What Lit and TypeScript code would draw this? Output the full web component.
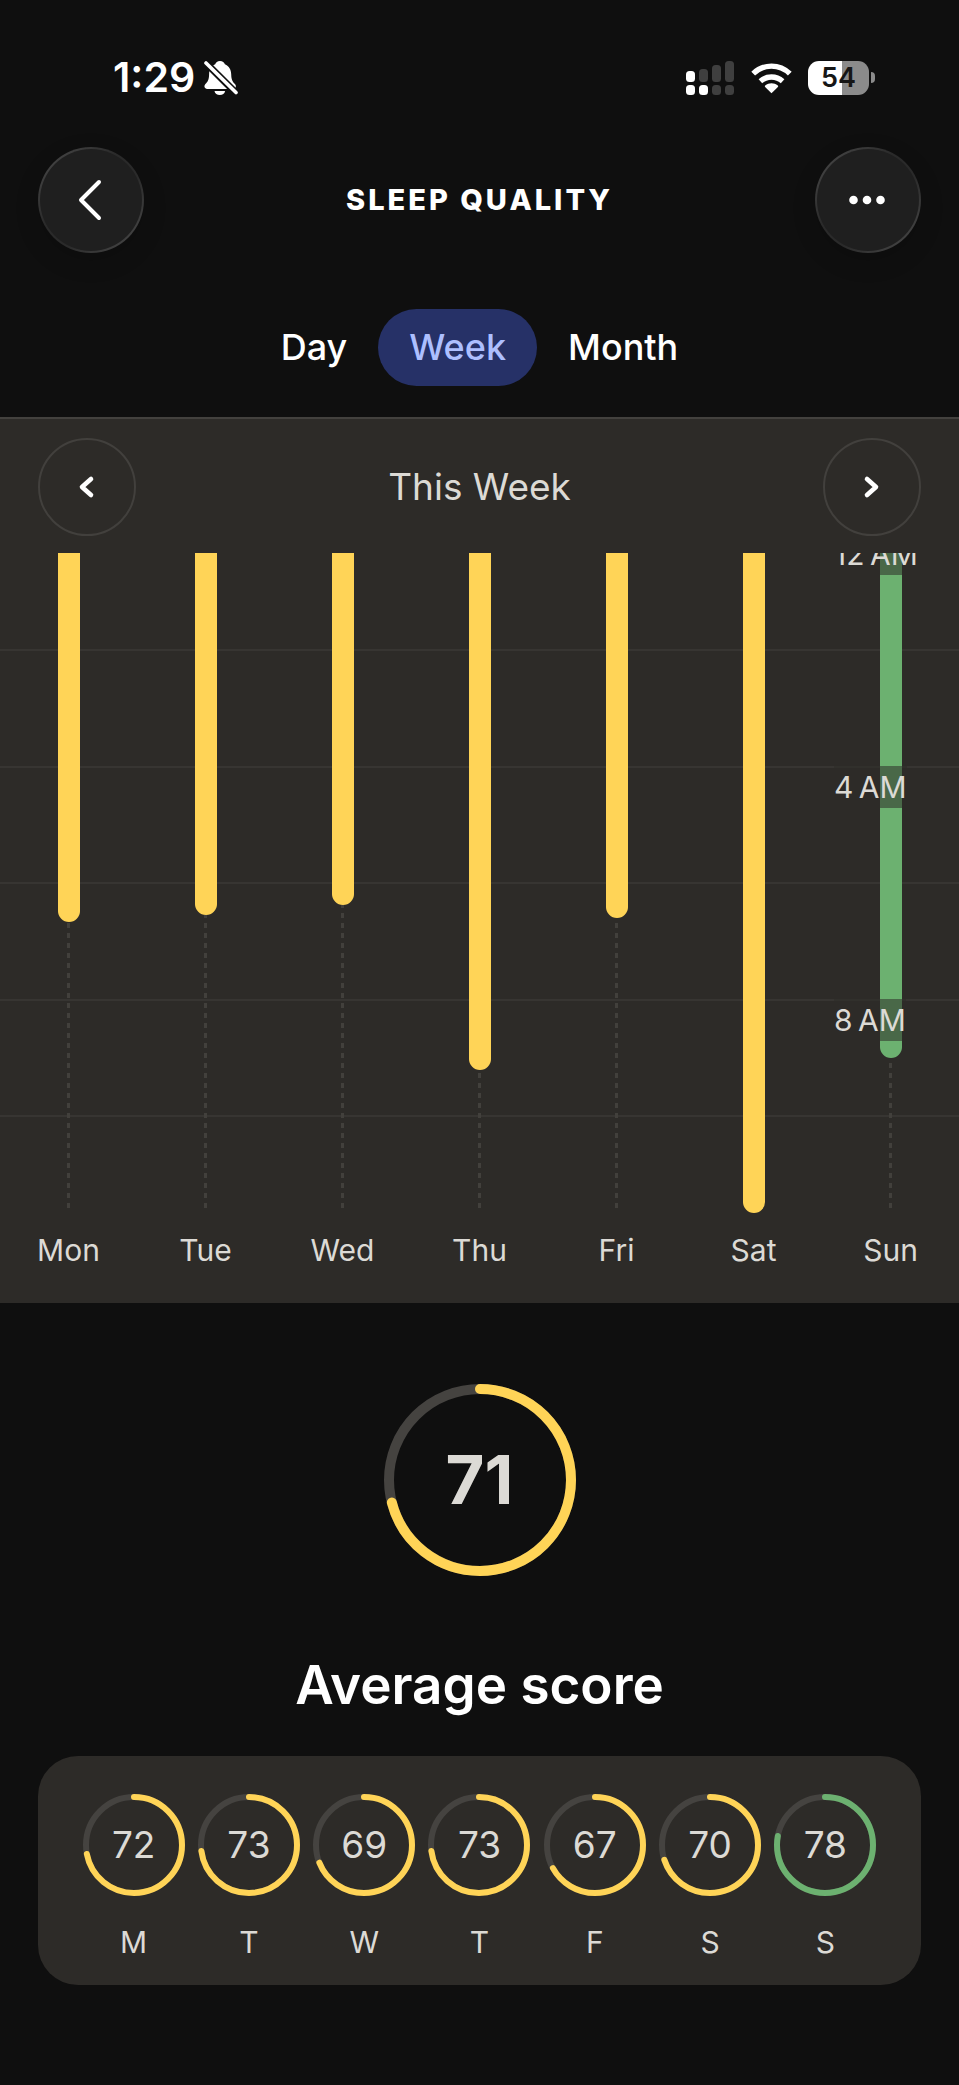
import { LitElement, html, svg, css } from "lit";
import { customElement, property, state } from "lit/decorators.js";
import { classMap } from "lit/directives/class-map.js";
import { styleMap } from "lit/directives/style-map.js";

type Level = "fair" | "good";

interface Night {
  day: string;
  wake: number; // minutes after midnight
  score: number;
  level: Level;
}

const NIGHTS: Night[] = [
  { day: "Mon", wake: 401, score: 72, level: "fair" },
  { day: "Tue", wake: 394, score: 73, level: "fair" },
  { day: "Wed", wake: 383, score: 69, level: "fair" },
  { day: "Thu", wake: 554, score: 73, level: "fair" },
  { day: "Fri", wake: 397, score: 67, level: "fair" },
  { day: "Sat", wake: 701, score: 70, level: "fair" },
  { day: "Sun", wake: 541, score: 78, level: "good" },
];

const LAST_WAKE = Math.max(...NIGHTS.map((n) => n.wake));

// One row per two hours, labelled every four.
const HOURS = ["12\u202fAM", "", "4\u202fAM", "", "8\u202fAM", ""];

@customElement("score-ring")
export class ScoreRing extends LitElement {
  static styles = css`
    :host {
      display: grid;
      place-items: center;
      color: #dcdad5;
    }
    .ring,
    .value {
      grid-area: 1 / 1;
    }
    .ring {
      display: block;
    }
    .track,
    .arc {
      fill: none;
    }
    .track {
      stroke: #454340;
    }
    .arc {
      stroke: #ffd457;
      stroke-linecap: round;
    }
    .arc.good {
      stroke: #6cb170;
    }
    .value {
      font-size: 37px;
      line-height: 48px;
    }
    .value.large {
      font-size: 67px;
      line-height: 80px;
      font-weight: 700;
    }
  `;

  @property({ type: Number }) score = 0;
  @property({ type: Number }) size = 102;
  @property({ type: Number }) stroke = 6;
  @property() level: Level = "fair";

  render() {
    const c = this.size / 2;
    const r = (this.size - this.stroke) / 2;
    return html`
      <svg class="ring" width=${this.size} height=${this.size} aria-hidden="true">
        <circle class="track" cx=${c} cy=${c} r=${r} stroke-width=${this.stroke}></circle>
        <circle
          class=${classMap({ arc: true, good: this.level === "good" })}
          cx=${c}
          cy=${c}
          r=${r}
          stroke-width=${this.stroke}
          pathLength="100"
          stroke-dasharray="${this.score} 100"
          transform="rotate(-90 ${c} ${c})"
        ></circle>
      </svg>
      <span class=${classMap({ value: true, large: this.size > 150 })}>${this.score}</span>
    `;
  }
}

@customElement("status-bar")
export class StatusBar extends LitElement {
  static styles = css`
    :host {
      display: flex;
      align-items: center;
      justify-content: space-between;
      padding: 52px 84px 44px 113px;
      height: 51px;
      color: #fff;
    }
    .side {
      display: flex;
      align-items: center;
    }
    .time {
      font-size: 41px;
      line-height: 51px;
      font-weight: 600;
      margin-right: 9px;
    }
    .icon {
      display: block;
    }
    .wifi {
      margin: 0 16px 0 17px;
    }
    .battery {
      display: flex;
      align-items: center;
      gap: 2px;
    }
    .cell {
      width: 61px;
      height: 34px;
      border-radius: 11px;
      background: linear-gradient(to right, #fff 55%, #8b8b8b 55%);
      color: #161616;
      font-size: 27px;
      line-height: 34px;
      font-weight: 600;
      text-align: center;
    }
    .nub {
      width: 4px;
      height: 11px;
      border-radius: 0 5px 5px 0;
      background: #8b8b8b;
    }
  `;

  render() {
    const heights = [11, 13, 17, 21];
    return html`
      <div class="side">
        <span class="time">1:29</span>
        <svg class="icon" width="34" height="36" viewBox="0 0 34 36" role="img" aria-label="Silent">
          <path
            fill="#fff"
            d="M16 1c2.600 0 4.300 1.400 4.900 3.200 4.200 1.700 6.200 5.400 6.300 10 .1 5.800 1.600 7.600 3.700 9.800 1.900 2 .9 5-1.900 5H3.400C.4 29-.5 26 1.400 24c2.300-2.300 3.600-4.300 3.700-9.800.1-4.600 2-8.300 6.100-10C11.800 2.400 13.400 1 16 1z"
          />
          <path fill="#fff" d="M10.500 31h10.600c-.3 2.500-2.600 4-5.300 4s-5-1.500-5.300-4z" />
          <path stroke="#0f0f0f" stroke-width="7" d="M1 2l33 33" />
          <path stroke="#fff" stroke-width="3.600" stroke-linecap="round" d="M2 3l30 29.500" />
        </svg>
      </div>
      <div class="side">
        <svg class="icon" width="48" height="36" viewBox="0 0 48 36" role="img" aria-label="Signal">
          ${heights.map(
            (h, i) => svg`
              <rect x=${i * 13} y=${22 - h} width="9" height=${h} rx="3.500" fill=${i < 1 ? "#fff" : "#3f3f3f"} />
              <rect x=${i * 13} y="25" width="9" height="10" rx="3.500" fill=${i < 2 ? "#fff" : "#3f3f3f"} />`
          )}
        </svg>
        <svg class="icon wifi" width="41" height="32" viewBox="0 0 41 32" role="img" aria-label="Wi-Fi">
          <path
            fill="#fff"
            d="M20.500 31.200l-6.400-6.300c-.4-.4-.4-1 .1-1.400 3.700-2.900 8.900-2.900 12.600 0 .5.4.5 1 .1 1.400z"
          />
          <path fill="none" stroke="#fff" stroke-width="5.400" d="M9.400 19.200c6.400-5.700 15.800-5.700 22.200 0" />
          <path fill="none" stroke="#fff" stroke-width="5.400" d="M2.200 11.600c10.300-10 26.300-10 36.600 0" />
        </svg>
        <div class="battery">
          <div class="cell">54</div>
          <div class="nub"></div>
        </div>
      </div>
    `;
  }
}

@customElement("sleep-chart")
export class SleepChart extends LitElement {
  static styles = css`
    :host {
      display: block;
      color: #dcdad5;
    }
    .plot {
      display: grid;
      grid-template-rows: 660px;
      align-items: end;
      overflow: hidden;
    }
    .layer {
      grid-area: 1 / 1;
      height: 680px;
      display: grid;
    }
    .hours {
      grid-template-rows: repeat(5, 1fr) 98px;
    }
    .line {
      border-top: 2px solid #373532;
    }
    .tick {
      justify-self: end;
      width: 125px;
    }
    .tag {
      display: inline-block;
      background: rgba(45, 43, 40, 0.55);
      font-size: 30px;
      line-height: 42px;
      white-space: nowrap;
    }
    .columns {
      grid-template-columns: repeat(7, 1fr);
    }
    .column {
      display: flex;
      flex-direction: column;
      align-items: center;
    }
    .bar {
      flex: none;
      width: 22px;
      border-radius: 0 0 11px 11px;
      background: #ffd457;
    }
    .bar.good {
      background: #6cb170;
    }
    .rest {
      flex: 1;
      width: 3px;
      margin-bottom: 5px;
      background: repeating-linear-gradient(to top, #42403c 0 5px, transparent 5px 10px);
    }
    .days {
      display: grid;
      grid-template-columns: repeat(7, 1fr);
      margin: 0;
      padding: 19px 0 35px;
      list-style: none;
      font-size: 30px;
      line-height: 36px;
      text-align: center;
    }
  `;

  render() {
    return html`
      <div class="plot">
        <div class="layer hours">${HOURS.map(() => html`<div class="line"></div>`)}</div>
        <div class="layer columns">
          ${NIGHTS.map(
            (n) => html`<div class="column">
              <div
                class=${classMap({ bar: true, good: n.level === "good" })}
                style=${styleMap({ height: `${(n.wake / LAST_WAKE) * 100}%` })}
              ></div>
              <div class="rest"></div>
            </div>`
          )}
        </div>
        <div class="layer hours">
          ${HOURS.map((h) => html`<div class="tick">${h ? html`<span class="tag">${h}</span>` : ""}</div>`)}
        </div>
      </div>
      <ul class="days">
        ${NIGHTS.map((n) => html`<li>${n.day}</li>`)}
      </ul>
    `;
  }
}

@customElement("app-root")
export class AppRoot extends LitElement {
  static styles = css`
    :host {
      display: block;
      min-height: 100vh;
      background: #0f0f0f;
      color: #fff;
      font-family: Inter, "Liberation Sans", sans-serif;
    }
    button {
      margin: 0;
      padding: 0;
      border: 0;
      background: none;
      color: inherit;
      font: inherit;
      cursor: pointer;
    }
    .header,
    .range {
      display: flex;
      align-items: center;
      justify-content: space-between;
    }
    .header {
      padding: 0 38px;
    }
    .round {
      display: grid;
      place-items: center;
      box-sizing: border-box;
      border-radius: 50%;
    }
    .glass {
      width: 106px;
      height: 106px;
      border: 2px solid transparent;
      background: linear-gradient(#1f1f1f, #1f1f1f) padding-box,
        linear-gradient(135deg, #444 10%, #2a2a2a 40%, #2a2a2a 60%, #444 90%) border-box;
      box-shadow: 0 8px 24px rgba(0, 0, 0, 0.15);
    }
    .title {
      margin: 0;
      font-size: 29px;
      line-height: 36px;
      font-weight: 800;
      letter-spacing: 3px;
    }
    .tabs {
      display: flex;
      justify-content: center;
      padding: 56px 0 31px;
    }
    .tab {
      padding: 0 31px;
      border-radius: 39px;
      font-size: 36px;
      line-height: 77px;
      font-weight: 500;
    }
    .tab.active {
      background: #263167;
      color: #adbfff;
    }
    .panel {
      border-top: 2px solid #43413e;
      background: #2d2b28;
    }
    .range {
      padding: 19px 38px 17px;
      color: #dcdad5;
    }
    .range-title {
      margin: 0;
      font-size: 37px;
      line-height: 48px;
      font-weight: 400;
    }
    .step {
      width: 98px;
      height: 98px;
      border: 2px solid #42403d;
    }
    .summary {
      padding: 81px 38px 100px;
    }
    .heading {
      margin: 77px 0 39px;
      font-size: 53px;
      line-height: 64px;
      font-weight: 600;
      text-align: center;
    }
    .scores {
      display: grid;
      grid-template-columns: repeat(7, 1fr);
      margin: 0;
      padding: 38px 38px 25px;
      list-style: none;
      border-radius: 40px;
      background: #2d2b28;
      color: #dcdad5;
      font-size: 30px;
      line-height: 36px;
      text-align: center;
    }
    .score {
      display: grid;
      gap: 28px;
    }
  `;

  @state() private tab = "Week";

  private chevron(d: string) {
    return html`<svg width="24" height="24" viewBox="0 0 24 24" aria-hidden="true">
      <path d=${d} fill="none" stroke="#fff" stroke-width="4.600" stroke-linecap="round" stroke-linejoin="round" />
    </svg>`;
  }

  render() {
    const average = Math.floor(NIGHTS.reduce((sum, n) => sum + n.score, 0) / NIGHTS.length);
    return html`
      <status-bar></status-bar>
      <header class="header">
        <button class="round glass" aria-label="Back">
          <svg width="40" height="44" viewBox="0 0 40 44" aria-hidden="true">
            <path
              d="M28 4L10 22l18 18"
              fill="none"
              stroke="#fff"
              stroke-width="4"
              stroke-linecap="round"
              stroke-linejoin="round"
            />
          </svg>
        </button>
        <h1 class="title">SLEEP QUALITY</h1>
        <button class="round glass" aria-label="More">
          <svg width="40" height="12" viewBox="0 0 40 12" aria-hidden="true">
            <circle cx="5.500" cy="6" r="4.300" fill="#fff" />
            <circle cx="19" cy="6" r="4.300" fill="#fff" />
            <circle cx="32.500" cy="6" r="4.300" fill="#fff" />
          </svg>
        </button>
      </header>
      <nav class="tabs">
        ${["Day", "Week", "Month"].map(
          (name) => html`<button
            class=${classMap({ tab: true, active: name === this.tab })}
            aria-pressed=${name === this.tab}
            @click=${() => (this.tab = name)}
          >
            ${name}
          </button>`
        )}
      </nav>
      <section class="panel">
        <div class="range">
          <button class="round step" aria-label="Previous week">${this.chevron("M16 4L7 12l9 8")}</button>
          <h2 class="range-title">This Week</h2>
          <button class="round step" aria-label="Next week">${this.chevron("M7 4l9 8-9 8")}</button>
        </div>
        <sleep-chart></sleep-chart>
      </section>
      <section class="summary">
        <score-ring .score=${average} .size=${192} .stroke=${10}></score-ring>
        <h2 class="heading">Average score</h2>
        <ul class="scores">
          ${NIGHTS.map(
            (n) => html`<li class="score">
              <score-ring .score=${n.score} .level=${n.level}></score-ring>
              <span>${n.day[0]}</span>
            </li>`
          )}
        </ul>
      </section>
    `;
  }
}
